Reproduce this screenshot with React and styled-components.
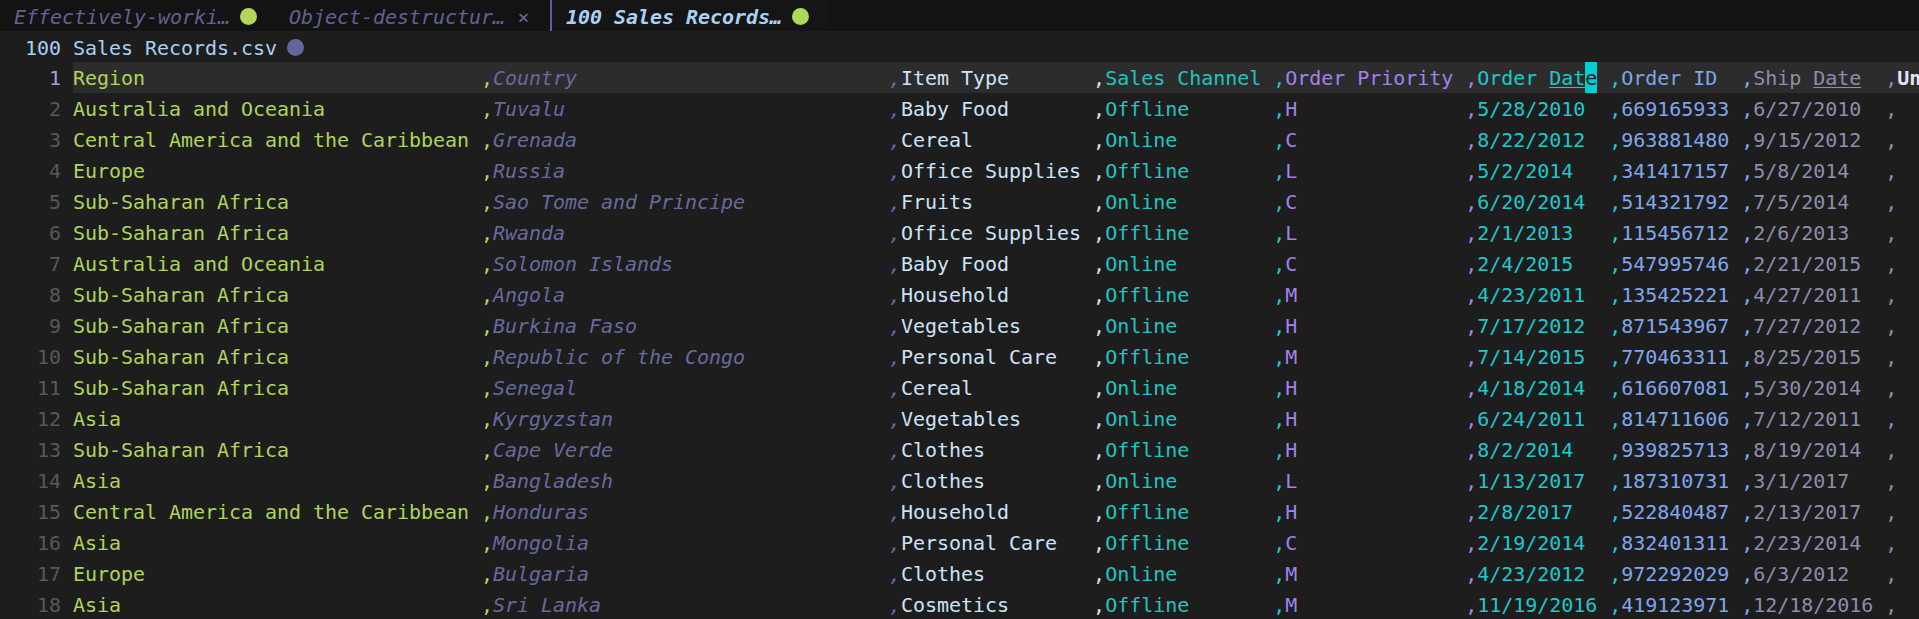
import React from "react";
import styled, { createGlobalStyle } from "styled-components";

const GlobalStyle = createGlobalStyle`
  html, body {
    margin: 0;
    padding: 0;
    background: #1d1d1d;
  }
  body {
    overflow: hidden;
  }
`;

const mono = `"DejaVu Sans Mono", "Liberation Mono", monospace`;

let Screen = styled.div`
  width: 1919px;
  height: 619px;
  overflow: hidden;
  background: #1d1d1d;
  font-family: ${mono};
  font-size: 20px;
  letter-spacing: -0.04px;
`;

let TabBar = styled.div`
  display: flex;
  height: 31px;
  background: #131313;
`;

let Tab = styled.div`
  display: flex;
  align-items: center;
  gap: 10px;
  padding: 2px 18px 0 14px;
  border-left: ${(p) => (p.$active ? "2px solid #5b5da6" : "none")};
  background: ${(p) => (p.$active ? "#151515" : "transparent")};
  font-style: italic;
  font-weight: ${(p) => (p.$active ? "bold" : "normal")};
  color: ${(p) => (p.$active ? "#a9d1f5" : "#616290")};
  white-space: pre;
`;

let Dot = styled.span`
  flex: none;
  width: 17px;
  height: 17px;
  border-radius: 50%;
  background: ${(p) => p.$color};
`;

let Close = styled.span`
  width: 17px;
  text-align: center;
  font-style: normal;
  color: #6a6b8e;
`;

let Winbar = styled.div`
  display: flex;
  align-items: center;
  gap: 10px;
  height: 31px;
  box-sizing: border-box;
  padding: 2px 0 0 25px;
  color: #a9cff2;
  white-space: pre;
`;

let Line = styled.div`
  display: flex;
  height: 31px;
  white-space: pre;
`;

let LineNo = styled.div`
  flex: none;
  width: 73px;
  padding: 2px 12px 0 0;
  box-sizing: border-box;
  line-height: 29px;
  text-align: right;
  color: ${(p) => (p.$current ? "#a0a3d4" : "#585858")};
`;

let Code = styled.div`
  flex: 1;
  overflow: hidden;
  padding-top: 2px;
  box-sizing: border-box;
  line-height: 29px;
  background: ${(p) => (p.$current ? "#2c2c2c" : "transparent")};
`;

let Cell = styled.span`
  color: ${(p) => p.$color};
  font-style: ${(p) => (p.$italic ? "italic" : "normal")};
  font-weight: ${(p) => (p.$bold ? "bold" : "normal")};
`;

let Mark = styled.span`
  text-decoration: underline;
  text-decoration-thickness: 1px;
  text-underline-offset: 2px;
`;

let Cursor = styled.span`
  display: inline-block;
  height: 29px;
  padding-top: 2px;
  margin-top: -2px;
  vertical-align: top;
  background: #00cdd4;
  color: #1d1d1d;
`;

const columns = [
  { width: 34, color: "#afd35d" },
  { width: 33, color: "#676a9c", italic: true },
  { width: 16, color: "#cbe3f7" },
  { width: 14, color: "#21c5bf" },
  { width: 15, color: "#a182ee" },
  { width: 11, color: "#1ec8cc" },
  { width: 10, color: "#7fa6ee" },
  { width: 11, color: "#8c8eab" },
  { width: 0, color: "#e2e2f8", bold: true },
];

const header = [
  "Region",
  "Country",
  "Item Type",
  "Sales Channel",
  "Order Priority",
  "Order Date",
  "Order ID",
  "Ship Date",
  "Units Sold",
];

const records = [
  ["Australia and Oceania", "Tuvalu", "Baby Food", "Offline", "H", "5/28/2010", "669165933", "6/27/2010"],
  ["Central America and the Caribbean", "Grenada", "Cereal", "Online", "C", "8/22/2012", "963881480", "9/15/2012"],
  ["Europe", "Russia", "Office Supplies", "Offline", "L", "5/2/2014", "341417157", "5/8/2014"],
  ["Sub-Saharan Africa", "Sao Tome and Principe", "Fruits", "Online", "C", "6/20/2014", "514321792", "7/5/2014"],
  ["Sub-Saharan Africa", "Rwanda", "Office Supplies", "Offline", "L", "2/1/2013", "115456712", "2/6/2013"],
  ["Australia and Oceania", "Solomon Islands", "Baby Food", "Online", "C", "2/4/2015", "547995746", "2/21/2015"],
  ["Sub-Saharan Africa", "Angola", "Household", "Offline", "M", "4/23/2011", "135425221", "4/27/2011"],
  ["Sub-Saharan Africa", "Burkina Faso", "Vegetables", "Online", "H", "7/17/2012", "871543967", "7/27/2012"],
  ["Sub-Saharan Africa", "Republic of the Congo", "Personal Care", "Offline", "M", "7/14/2015", "770463311", "8/25/2015"],
  ["Sub-Saharan Africa", "Senegal", "Cereal", "Online", "H", "4/18/2014", "616607081", "5/30/2014"],
  ["Asia", "Kyrgyzstan", "Vegetables", "Online", "H", "6/24/2011", "814711606", "7/12/2011"],
  ["Sub-Saharan Africa", "Cape Verde", "Clothes", "Offline", "H", "8/2/2014", "939825713", "8/19/2014"],
  ["Asia", "Bangladesh", "Clothes", "Online", "L", "1/13/2017", "187310731", "3/1/2017"],
  ["Central America and the Caribbean", "Honduras", "Household", "Offline", "H", "2/8/2017", "522840487", "2/13/2017"],
  ["Asia", "Mongolia", "Personal Care", "Offline", "C", "2/19/2014", "832401311", "2/23/2014"],
  ["Europe", "Bulgaria", "Clothes", "Online", "M", "4/23/2012", "972292029", "6/3/2012"],
  ["Asia", "Sri Lanka", "Cosmetics", "Offline", "M", "11/19/2016", "419123971", "12/18/2016"],
];

const tabs = [
  { title: "Effectively-worki…", dot: true },
  { title: "Object-destructur…", close: true },
  { title: "100 Sales Records…", dot: true, active: true },
];

function cellText(value, i) {
  const col = columns[i];
  if (!col.width) return value;
  return value.padEnd(col.width) + ",";
}

function HeaderRow() {
  return (
    <Line>
      <LineNo $current>1</LineNo>
      <Code $current>
        {header.map((value, i) => {
          const col = columns[i];
          let content = cellText(value, i);
          if (value === "Order Date") {
            content = (
              <>
                Order <Mark>Dat</Mark>
                <Cursor>e</Cursor>
                {" ,"}
              </>
            );
          }
          if (value === "Ship Date") {
            content = (
              <>
                Ship <Mark>Date</Mark>
                {"  ,"}
              </>
            );
          }
          return (
            <Cell key={i} $color={col.color} $italic={col.italic} $bold={col.bold}>
              {content}
            </Cell>
          );
        })}
      </Code>
    </Line>
  );
}

export default function App() {
  return (
    <>
      <GlobalStyle />
      <Screen>
        <TabBar>
          {tabs.map((t) => (
            <Tab key={t.title} $active={t.active}>
              {t.title}
              {t.dot && <Dot $color="#b2d65c" />}
              {t.close && <Close>×</Close>}
            </Tab>
          ))}
        </TabBar>
        <Winbar>
          100 Sales Records.csv
          <Dot $color="#64659a" />
        </Winbar>
        <HeaderRow />
        {records.map((row, r) => (
          <Line key={r}>
            <LineNo>{r + 2}</LineNo>
            <Code>
              {[...row, ""].map((value, i) => (
                <Cell key={i} $color={columns[i].color} $italic={columns[i].italic}>
                  {cellText(value, i)}
                </Cell>
              ))}
            </Code>
          </Line>
        ))}
      </Screen>
    </>
  );
}
